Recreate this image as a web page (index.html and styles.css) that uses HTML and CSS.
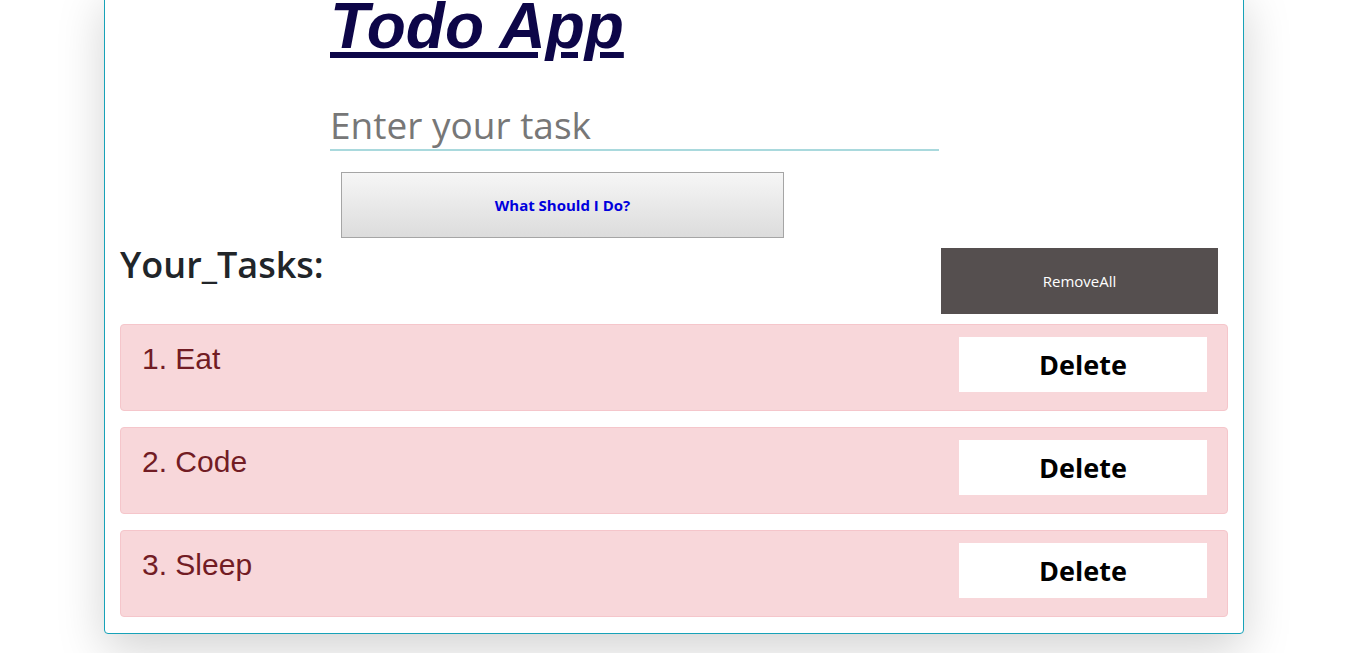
FILE: index.html
```html
<!DOCTYPE html>
<html lang="en">
<head>
<meta charset="utf-8">
<title>Todo App</title>
<link rel="stylesheet" href="styles.css">
</head>
<body>
  <main class="card">
    <section class="head">
      <h1 class="title">Todo App</h1>
      <form class="add-form">
        <input class="task-input" type="text" placeholder="Enter your task">
        <button class="suggest-btn" type="button">What Should I Do?</button>
      </form>
    </section>
    <div class="tasks-head">
      <h2 class="tasks-title">Your_Tasks:</h2>
      <button class="remove-all" type="button">RemoveAll</button>
    </div>
    <div class="task">
      <p class="task-text">1. Eat</p>
      <button class="delete-btn" type="button">Delete</button>
    </div>
    <div class="task">
      <p class="task-text">2. Code</p>
      <button class="delete-btn" type="button">Delete</button>
    </div>
    <div class="task">
      <p class="task-text">3. Sleep</p>
      <button class="delete-btn" type="button">Delete</button>
    </div>
  </main>
</body>
</html>
```
FILE: styles.css
```css
html, body {
  margin: 0;
  padding: 0;
  background: #ffffff;
  font-family: "Open Sans", "Noto Sans", sans-serif;
  overflow: hidden;
}

body {
  min-height: 653px;
}

.card {
  box-sizing: border-box;
  width: 1140px;
  margin: -12px 0 0 104px;
  padding: 0 15px;
  border: 1px solid #17a2b8;
  border-radius: 4px;
  background: #ffffff;
  box-shadow: 0 1rem 3rem rgba(0, 0, 0, 0.175);
}

.head {
  margin-left: 210px;
}

.title {
  margin: 0;
  font-family: "Liberation Sans", Arial, sans-serif;
  font-size: 64px;
  line-height: 74px;
  font-weight: 700;
  font-style: italic;
  text-decoration: underline;
  color: #0d0648;
}

.add-form {
  display: flex;
  flex-direction: column;
  align-items: flex-start;
}

.task-input {
  box-sizing: content-box;
  width: 609px;
  height: 48px;
  margin: 38px 0 0;
  padding: 0;
  border: none;
  border-bottom: 2px solid #a9d9dd;
  outline: none;
  font-family: "Open Sans", sans-serif;
  font-size: 37px;
  line-height: 48px;
  color: #333;
  background: transparent;
}

.task-input::placeholder {
  color: #777777;
}

.suggest-btn {
  box-sizing: border-box;
  width: 443px;
  height: 66px;
  margin: 21px 0 0 11px;
  border: 1px solid #a5a5a5;
  background: linear-gradient(#f6f6f6, #dcdcdc);
  font-family: "Open Sans", sans-serif;
  font-size: 15px;
  font-weight: 700;
  color: #0000dd;
}

.tasks-head {
  display: flex;
  justify-content: space-between;
  align-items: flex-start;
  margin-top: 10px;
  margin-bottom: 10px;
}

.tasks-title {
  margin: -5px 0 0;
  font-size: 36px;
  line-height: 1.2;
  font-weight: 600;
  color: #212529;
}

.remove-all {
  width: 277px;
  height: 66px;
  margin-right: 10px;
  border: none;
  background: #554f4f;
  color: #ffffff;
  font-family: "Open Sans", sans-serif;
  font-size: 15px;
}

.task {
  display: flex;
  justify-content: space-between;
  align-items: flex-start;
  height: 87px;
  box-sizing: border-box;
  margin-bottom: 16px;
  padding: 12px 20px;
  background: #f8d7da;
  border: 1px solid #f5c6cb;
  border-radius: 4px;
}

.task-text {
  margin: 0;
  padding-left: 1px;
  font-family: "Liberation Sans", Arial, sans-serif;
  font-size: 30px;
  line-height: 1.45;
  color: #721c24;
}

.delete-btn {
  width: 248px;
  height: 55px;
  border: none;
  background: #ffffff;
  font-family: "Open Sans", sans-serif;
  font-size: 27px;
  font-weight: 700;
  color: #000000;
}
```
